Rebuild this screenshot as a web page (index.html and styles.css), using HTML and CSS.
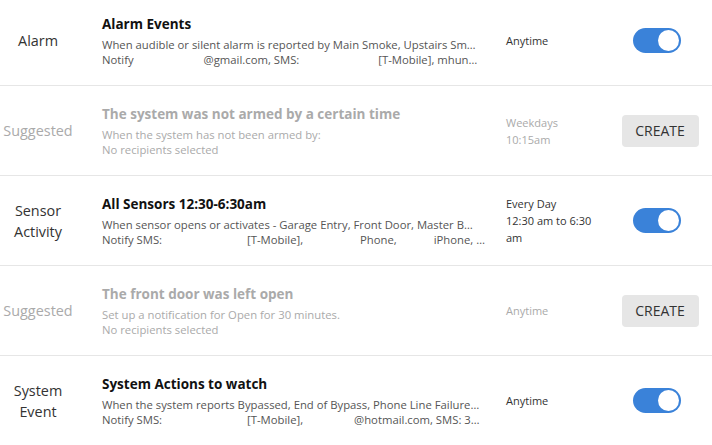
FILE: index.html
```html
<!DOCTYPE html>
<html lang="en">
<head>
    <meta charset="UTF-8">
    <meta name="viewport" content="width=device-width, initial-scale=1.0">
    <title>Notifications</title>
    <link rel="stylesheet" href="styles.css">
</head>
<body>
    <div class="rules">
        <div class="rule">
            <div class="category">Alarm</div>
            <div class="details">
                <div class="title">Alarm Events</div>
                <div class="line">When audible or silent alarm is reported by Main Smoke, Upstairs Sm…</div>
                <div class="line">Notify <span class="redact r1"></span>@gmail.com, SMS: <span class="redact r2"></span>[T-Mobile], mhun…</div>
            </div>
            <div class="schedule">Anytime</div>
            <div class="action"><span class="toggle on"></span></div>
        </div>

        <div class="rule suggested">
            <div class="category">Suggested</div>
            <div class="details">
                <div class="title">The system was not armed by a certain time</div>
                <div class="line">When the system has not been armed by:</div>
                <div class="line">No recipients selected</div>
            </div>
            <div class="schedule">Weekdays<br>10:15am</div>
            <div class="action"><button class="create">CREATE</button></div>
        </div>

        <div class="rule">
            <div class="category">Sensor<br>Activity</div>
            <div class="details">
                <div class="title">All Sensors 12:30-6:30am</div>
                <div class="line">When sensor opens or activates - Garage Entry, Front Door, Master B…</div>
                <div class="line">Notify SMS: <span class="redact r3"></span>[T-Mobile], <span class="redact r4"></span>Phone, <span class="redact r5"></span>iPhone, …</div>
            </div>
            <div class="schedule">Every Day<br>12:30 am to 6:30 am</div>
            <div class="action"><span class="toggle on"></span></div>
        </div>

        <div class="rule suggested">
            <div class="category">Suggested</div>
            <div class="details">
                <div class="title">The front door was left open</div>
                <div class="line">Set up a notification for Open for 30 minutes.</div>
                <div class="line">No recipients selected</div>
            </div>
            <div class="schedule">Anytime</div>
            <div class="action"><button class="create">CREATE</button></div>
        </div>

        <div class="rule">
            <div class="category">System<br>Event</div>
            <div class="details">
                <div class="title">System Actions to watch</div>
                <div class="line">When the system reports Bypassed, End of Bypass, Phone Line Failure…</div>
                <div class="line">Notify SMS: <span class="redact r3"></span>[T-Mobile], <span class="redact r6"></span>@hotmail.com, SMS: 3…</div>
            </div>
            <div class="schedule">Anytime</div>
            <div class="action"><span class="toggle on"></span></div>
        </div>
    </div>
</body>
</html>
```

FILE: styles.css
```css
body {
    margin: 0;
    background: #fff;
    font-family: "Open Sans", "Noto Sans", sans-serif;
    color: #222;
}
.rules {
    margin-top: -4px;
}
.rule {
    display: grid;
    grid-template-columns: 76px 430px 106px 94px;
    align-items: center;
    height: 89px;
    border-bottom: 1px solid #e6e6e6;
}
.category {
    text-align: center;
    font-size: 14.4px;
    line-height: 21px;
    color: #333;
}
.details {
    padding-left: 26px;
    min-width: 0;
}
.title {
    font-size: 13.5px;
    font-weight: 700;
    color: #111;
    margin-bottom: 4px;
}
.line {
    font-size: 11.3px;
    line-height: 15px;
    color: #555;
    white-space: nowrap;
}
.redact {
    display: inline-block;
}
.r1 { width: 67px; }
.r2 { width: 76px; }
.r3 { width: 82px; }
.r4 { width: 54px; }
.r5 { width: 34px; }
.r6 { width: 48px; }
.schedule {
    font-size: 11px;
    line-height: 17px;
    color: #333;
    padding-right: 8px;
}
.action {
    display: flex;
    justify-content: center;
}
.toggle {
    display: inline-block;
    position: relative;
    width: 48px;
    height: 25px;
    margin-right: 4px;
    border-radius: 13px;
    background: #ccc;
}
.toggle.on {
    background: #3a82d9;
}
.toggle::after {
    content: "";
    position: absolute;
    top: 2px;
    left: 2px;
    width: 21px;
    height: 21px;
    border-radius: 50%;
    background: #fff;
}
.toggle.on::after {
    left: 25px;
}
.create {
    font-family: "Open Sans", "Noto Sans", sans-serif;
    font-size: 14px;
    color: #333;
    background: #e6e6e6;
    border: none;
    border-radius: 4px;
    width: 77px;
    height: 32px;
    padding: 0;
    margin-left: 2px;
}
.suggested .category,
.suggested .title,
.suggested .line,
.suggested .schedule {
    color: #aaa;
}
```
